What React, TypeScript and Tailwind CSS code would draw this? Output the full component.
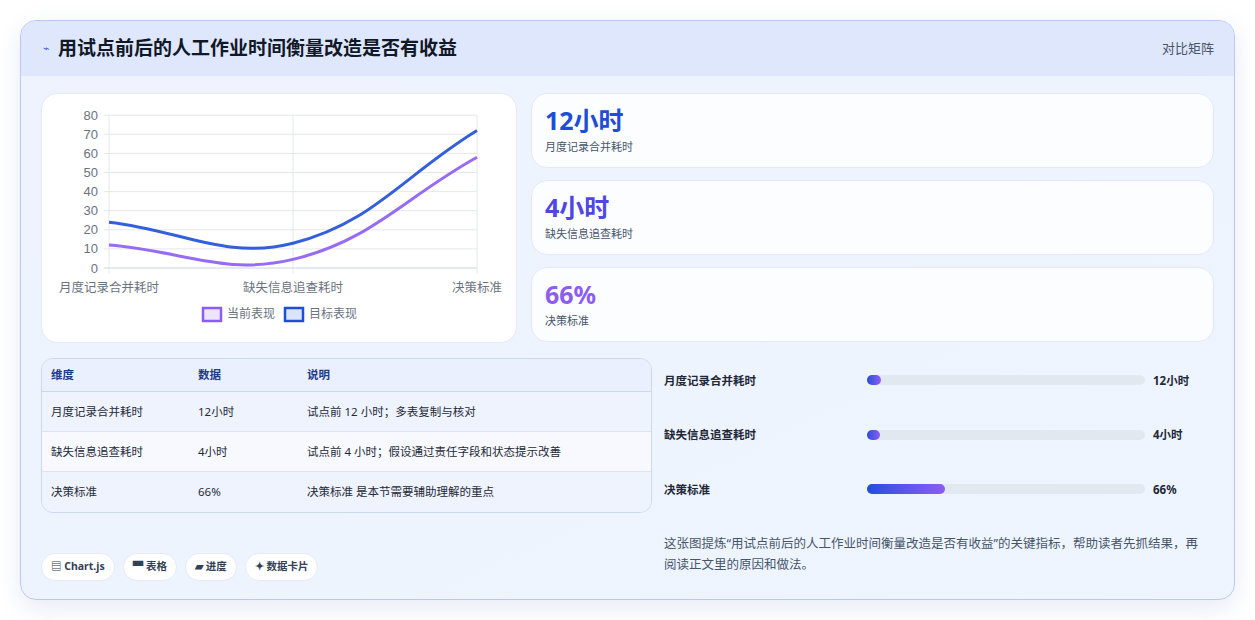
import React from "react";

const X0 = 107, X1 = 475, Y0 = 267, YS = 19.1;
const xs = [X0, (X0 + X1) / 2, X1];
const yv = (v: number) => Y0 - (v / 10) * YS;

function path(vals: number[]) {
  const pts = vals.map((v, i) => [xs[i], yv(v)]);
  const t = 0.4;
  const cps = pts.map((p, i) => {
    const prev = pts[i - 1] || p, next = pts[i + 1] || p;
    const d01 = Math.hypot(p[0] - prev[0], p[1] - prev[1]);
    const d12 = Math.hypot(next[0] - p[0], next[1] - p[1]);
    let s01 = d01 / (d01 + d12 || 1), s12 = d12 / (d01 + d12 || 1);
    const fa = t * s01, fb = t * s12;
    return {
      prev: [p[0] - fa * (next[0] - prev[0]), p[1] - fa * (next[1] - prev[1])],
      next: [p[0] + fb * (next[0] - prev[0]), p[1] + fb * (next[1] - prev[1])],
    };
  });
  let d = `M${pts[0][0]},${pts[0][1]}`;
  for (let i = 1; i < pts.length; i++) {
    const a = cps[i - 1].next, b = cps[i].prev;
    d += ` C${a[0]},${a[1]} ${b[0]},${b[1]} ${pts[i][0]},${pts[i][1]}`;
  }
  return d;
}

const font = { fontFamily: '"Noto Sans","Noto Sans CJK SC",sans-serif' };

export default function App() {
  return (
    <div className="w-[1255px] h-[620px] bg-white pt-5 px-5" style={font}>
      <div className="w-[1215px] h-[580px] rounded-2xl border border-[#bcc8ee] overflow-hidden bg-gradient-to-br from-[#eef3fe] to-[#eef5ff] shadow-[0_8px_24px_rgba(100,120,200,0.15)]">
        <div className="h-[55px] bg-[#dfe7fd] flex items-center justify-between pl-[22px] pr-5">
          <div className="flex items-center gap-2">
            <span className="text-[#3b5bd6] text-[11px]">⌁</span>
            <span className="text-[19px] font-bold text-[#111827]">用试点前后的人工作业时间衡量改造是否有收益</span>
          </div>
          <span className="text-[13px] text-[#475569]">对比矩阵</span>
        </div>
        <div className="px-5 pt-[17px]">
          <div className="flex gap-[14px]">
            <div className="w-[476px] h-[250px] bg-white rounded-2xl border border-[#e3e9f6] relative">
              <svg width="476" height="250" viewBox="40 93 476 250" className="absolute inset-0">
                {[0,1,2,3,4,5,6,7,8].map(i => (
                  <g key={i}>
                    <line x1={X0 - 5} x2={X1} y1={yv(i*10)} y2={yv(i*10)} stroke={i===0?"#cbd5e1":"#e5e7eb"} />
                    <text x={96} y={yv(i*10)+4.5} textAnchor="end" fontSize="13" fill="#6b7280" fontFamily="Liberation Sans, sans-serif">{i*10}</text>
                  </g>
                ))}
                {xs.map((x, i) => <line key={i} x1={x} x2={x} y1={yv(80)} y2={Y0 + 5} stroke="#e5e7eb" />)}
                <path d={path([12,4.5,58])} fill="none" stroke="#8b5cf6" strokeWidth="3" opacity="0.9"/>
                <path d={path([24,13,72])} fill="none" stroke="#1d4ed8" strokeWidth="3" opacity="0.9"/>
                {["月度记录合并耗时","缺失信息追查耗时","决策标准"].map((l,i)=>(
                  <text key={l} x={i===2?500:xs[i]} y={291} textAnchor={i===2?"end":"middle"} fontSize="12.5" fill="#6b7280">{l}</text>
                ))}
                <rect x={201} y={307} width={18} height={13} fill="#ede4fd" stroke="#8b5cf6" strokeWidth="2.5"/>
                <text x={225} y={317} fontSize="12" fill="#6b7280">当前表现</text>
                <rect x={283} y={307} width={18} height={13} fill="#dbe4fb" stroke="#1d4ed8" strokeWidth="2.5"/>
                <text x={307} y={317} fontSize="12" fill="#6b7280">目标表现</text>
              </svg>
            </div>
            <div className="flex-1 flex flex-col gap-3">
              {[
                ["12小时","月度记录合并耗时","text-[#1d4ed8]"],
                ["4小时","缺失信息追查耗时","text-[#4f46e5]"],
                ["66%","决策标准","text-[#8b5cf6]"],
              ].map(([v,l,c]) => (
                <div key={l} className="h-[75px] bg-white/80 rounded-2xl border border-[#e1e8f7] px-[13px] pt-[9px]">
                  <div className={`text-[25px] font-bold leading-[34px] ${c}`}>{v}</div>
                  <div className="text-[11px] text-[#475569] mt-0.5">{l}</div>
                </div>
              ))}
            </div>
          </div>
          <div className="flex mt-[15px]">
            <div className="w-[611px]">
              <div className="h-[155px] rounded-xl border border-[#cfd8ea] overflow-hidden text-[11.5px] text-[#1f2937]">
                <div className="flex h-[33px] items-center bg-[#eaf0fd] border-b border-[#cfd8ea] font-bold text-[#1e3a8a]">
                  <div className="w-[156px] pl-[9px]">维度</div><div className="w-[109px]">数据</div><div>说明</div>
                </div>
                {[
                  ["月度记录合并耗时","12小时","试点前 12 小时；多表复制与核对","bg-[#eef3fd]"],
                  ["缺失信息追查耗时","4小时","试点前 4 小时；假设通过责任字段和状态提示改善","bg-[#f7f9fe]"],
                  ["决策标准","66%","决策标准 是本节需要辅助理解的重点","bg-[#eef3fd]"],
                ].map(([a,b,c,bg],i)=>(
                  <div key={a} className={`flex h-[40px] items-center ${bg} ${i<2?"border-b border-[#dde4f0]":""}`}>
                    <div className="w-[156px] pl-[9px]">{a}</div><div className="w-[109px]">{b}</div><div>{c}</div>
                  </div>
                ))}
              </div>
              <div className="flex gap-2 mt-[40px]">
                {["▤ Chart.js","▀ 表格","▰ 进度","✦ 数据卡片"].map(t=>(
                  <span key={t} className="h-[28px] px-[9px] rounded-full bg-white border border-[#e5eaf4] flex items-center text-[10.5px] font-bold text-[#334155]">{t}</span>
                ))}
              </div>
            </div>
            <div className="flex-1 pl-[12px] pr-[5px]">
              {[["月度记录合并耗时","12小时",5],["缺失信息追查耗时","4小时",3],["决策标准","66%",28]].map(([l,v,w],i)=>(
                <div key={l as string} className="flex items-center h-[54.5px] first:mt-[-5px]">
                  <div className="w-[203px] text-[11.5px] font-bold text-[#1f2937]">{l}</div>
                  <div className="w-[278px] h-[10px] rounded-full bg-[#e2e8f0]">
                    <div className="h-full rounded-full bg-gradient-to-r from-[#1d4ed8] to-[#8b5cf6]" style={{width: `${Math.max(w as number, 4.5)}%`}} />
                  </div>
                  <div className="ml-2 text-[11.5px] font-bold text-[#1f2937]">{v}</div>
                </div>
              ))}
              <p className="mt-[16px] text-[12.5px] leading-[21px] text-[#475569]">这张图提炼“用试点前后的人工作业时间衡量改造是否有收益”的关键指标，帮助读者先抓结果，再阅读正文里的原因和做法。</p>
            </div>
          </div>
        </div>
      </div>
    </div>
  );
}
